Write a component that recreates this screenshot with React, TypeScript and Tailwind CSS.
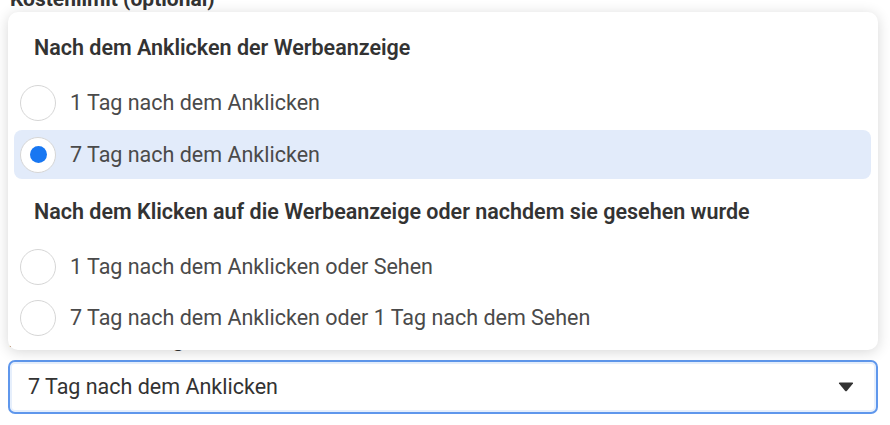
import React from "react";

const font = { fontFamily: "Roboto, 'Noto Sans', sans-serif" };

function Radio({ checked }: { checked?: boolean }) {
  return (
    <div className="w-[36px] h-[36px] rounded-full border border-[#d6d6d6] bg-white flex items-center justify-center shrink-0">
      {checked && <div className="w-[17px] h-[17px] rounded-full bg-[#1877f2]" />}
    </div>
  );
}

function Option({ label, checked, className }: { label: string; checked?: boolean; className?: string }) {
  return (
    <div
      className={
        "h-[49px] rounded-lg flex items-center pl-[6px] gap-[14px] " +
        (checked ? "bg-[#e2ebfa] " : "") +
        (className ?? "")
      }
    >
      <Radio checked={checked} />
      <span className="text-[21.5px] text-[#4a4a4a] leading-none">{label}</span>
    </div>
  );
}

export default function App() {
  return (
    <div className="relative w-[890px] h-[425px] bg-white overflow-hidden" style={font}>
      <div className="flex flex-col px-[8px] pr-[12px]">
        <div className="-mt-[12px] h-[22px] text-[21px] font-bold text-[#333] leading-[22px] pl-[2px]">
          Kostenlimit (optional)
        </div>
        <div className="mt-[319px] h-[22px] text-[21px] font-bold text-[#333] leading-[22px] pl-[2px] flex items-center gap-[6px]">
          Attribution Setting
          <span className="w-[16px] h-[16px] rounded-full bg-[#666] inline-block" />
        </div>
        <div className="mt-[9px] h-[54px] rounded-[7px] border-2 border-[#5f97ec] bg-white shadow-[inset_0_0_0_2px_#e6effc] flex items-center justify-between pl-[18px] pr-[22px]">
          <span className="text-[21.5px] text-[#333] leading-none">7 Tag nach dem Anklicken</span>
          <svg width="16" height="10" viewBox="0 0 16 10">
            <path d="M1 1.5 Q0.5 0.5 1.8 0.5 H14.2 Q15.5 0.5 15 1.5 L9 8.8 Q8 9.8 7 8.8 Z" fill="#333" />
          </svg>
        </div>
      </div>

      <div className="absolute left-[8px] top-[12px] w-[870px] h-[338px] bg-white rounded-[10px] shadow-[0_2px_14px_rgba(0,0,0,0.16)] flex flex-col px-[6px] pt-[14px]">
        <div className="h-[44px] flex items-center pl-[20px] text-[21.5px] font-semibold text-[#333]">
          Nach dem Anklicken der Werbeanzeige
        </div>
        <Option label="1 Tag nach dem Anklicken" className="mt-[8px]" />
        <Option label="7 Tag nach dem Anklicken" checked className="mt-[3px] mr-[1px]" />
        <div className="mt-[7px] h-[52px] flex items-center pl-[20px] text-[21.5px] font-semibold text-[#333]">
          Nach dem Klicken auf die Werbeanzeige oder nachdem sie gesehen wurde
        </div>
        <Option label="1 Tag nach dem Anklicken oder Sehen" className="mt-[4px]" />
        <Option label="7 Tag nach dem Anklicken oder 1 Tag nach dem Sehen" className="mt-[2px]" />
      </div>
    </div>
  );
}
